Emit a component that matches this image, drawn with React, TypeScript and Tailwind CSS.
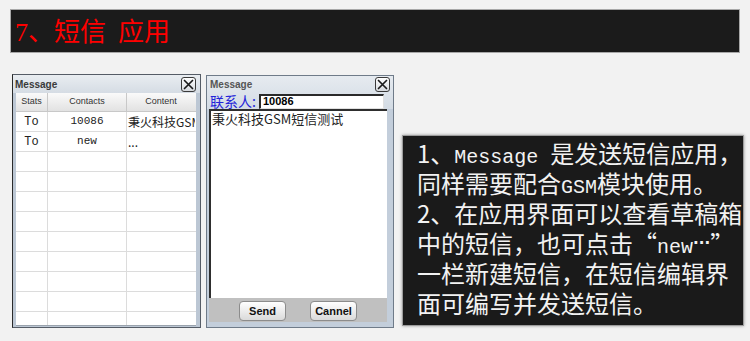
import React from "react";

const CloseBtn = () => (
  <div className="w-[15px] h-[15px] border border-[#3a3a3a] rounded-[3px] bg-linear-to-b from-white to-[#d6d9dd] flex items-center justify-center">
    <svg width="11" height="11" viewBox="0 0 11 11">
      <path d="M1.5 1.5 L9.5 9.5 M9.5 1.5 L1.5 9.5" stroke="#1a1a1a" strokeWidth="1.7" strokeLinecap="round" />
    </svg>
  </div>
);

const mono = "font-['Liberation_Mono',monospace]";
const cjk = "font-['Noto_Sans_CJK_SC',sans-serif]";

const Line = ({ children }: { children: React.ReactNode }) => (
  <div className="h-[30px] leading-[30px] whitespace-nowrap">{children}</div>
);

const M = ({ children }: { children: React.ReactNode }) => (
  <span className={`text-[20px] leading-none ${mono}`}>{children}</span>
);

export default function App() {
  const rows = [
    ["To", "10086", "秉火科技GSM短信测试"],
    ["To", "new", "..."],
    ["", "", ""],
    ["", "", ""],
    ["", "", ""],
    ["", "", ""],
    ["", "", ""],
    ["", "", ""],
    ["", "", ""],
    ["", "", ""],
    ["", "", ""],
  ];
  return (
    <div className="w-[750px] h-[341px] bg-[#f2f2f2] overflow-hidden">
      <div className="ml-[10px] mt-[9px] w-[730px] h-[44px] bg-[#1b1b1b] border border-[#a8a8a8] flex items-center pl-[4px] pt-[3px]">
        <span className="text-[26px] leading-none text-[#ff0000] font-['Liberation_Serif','Noto_Sans_CJK_SC',serif]">
          7、短信<span className="inline-block w-[12px]"></span>应用
        </span>
      </div>

      <div className="flex items-start mt-[21px]">
        {/* Left window */}
        <div className="ml-[12px] w-[189px] h-[254px] flex flex-col border border-[#555c66] border-l-[#2a2a2a] bg-[#bcc7d4]">
          <div className="h-[18px] flex items-center justify-between pl-[2px] pr-[4px] bg-linear-to-b from-[#e9edf1] to-[#d5dce4]">
            <span className="text-[10px] font-bold text-[#3a3a3a] font-['Liberation_Sans',sans-serif]">Message</span>
            <CloseBtn />
          </div>
          <div className="flex-1 ml-[3px] mr-[4px] mb-[1px] bg-white overflow-hidden border-b border-[#9aa3ad]">
            <div className="grid grid-cols-[32px_79px_68px] h-[19px] bg-linear-to-b from-[#fafafa] to-[#e2e2e2] border-b border-[#c8c8c8] text-[9px] text-[#333] font-['Liberation_Sans',sans-serif]">
              <div className="flex items-center justify-center border-r border-[#c8c8c8]">Stats</div>
              <div className="flex items-center justify-center border-r border-[#c8c8c8]">Contacts</div>
              <div className="flex items-center justify-center">Content</div>
            </div>
            {rows.map((r, i) => (
              <div key={i} className="grid grid-cols-[32px_79px_68px] h-[20px] border-b border-[#dcdcdc] text-[#222]">
                <div className={`flex items-center justify-center border-r border-[#dcdcdc] text-[12px] ${mono}`}>{r[0]}</div>
                <div className={`flex items-center justify-center border-r border-[#dcdcdc] text-[11px] ${mono}`}>{r[1]}</div>
                <div className={`flex items-center pl-[1px] overflow-hidden whitespace-nowrap text-[12px] ${cjk}`}>{r[2]}</div>
              </div>
            ))}
          </div>
        </div>

        {/* Right window */}
        <div className="ml-[5px] mt-[1px] w-[188px] h-[253px] flex flex-col border border-[#6f7b89] bg-[#c3cedb]">
          <div className="bg-linear-to-b from-[#e6ebf0] to-[#d3dbe4]">
            <div className="h-[17px] flex items-center justify-between pl-[3px] pr-[3px]">
              <span className="text-[10px] font-bold text-[#555] font-['Liberation_Sans',sans-serif]">Message</span>
              <CloseBtn />
            </div>
            <div className="h-[16px] flex items-center pl-[3px]">
              <span className={`text-[14px] leading-none text-[#2323d8] ${cjk}`}>联系人:</span>
              <div className="ml-[3px] w-[125px] h-[15px] bg-white border-t-2 border-l-2 border-[#2a2a2a] border-r border-b border-r-[#e0e0e0] border-b-[#e0e0e0] flex items-center pl-[2px]">
                <span className="text-[11px] font-bold text-black font-['Liberation_Sans',sans-serif] leading-none">10086</span>
              </div>
            </div>
          </div>
          <div className="ml-[2px] w-[178px] h-[189px] bg-white border-t-2 border-l-2 border-[#2e2e2e] pl-[1px]">
            <div className={`text-[13px] leading-[15px] text-[#222] ${cjk}`}>秉火科技GSM短信测试</div>
          </div>
          <div className="ml-[2px] w-[178px] h-[24px] bg-[#c0c0c0] flex items-center justify-center gap-[24px] pt-[2px]">
            <div className="w-[47px] h-[20px] rounded-[4px] border border-[#8c8c8c] bg-linear-to-b from-white to-[#dadada] flex items-center justify-center text-[11px] font-bold text-[#111] font-['Liberation_Sans',sans-serif]">
              Send
            </div>
            <div className="w-[47px] h-[20px] rounded-[4px] border border-[#8c8c8c] bg-linear-to-b from-white to-[#dadada] flex items-center justify-center text-[11px] font-bold text-[#111] font-['Liberation_Sans',sans-serif]">
              Cannel
            </div>
          </div>
        </div>

        {/* Text box */}
        <div className={`ml-[8px] mt-[61px] w-[342px] h-[191px] bg-[#1a1a1a] border border-[#9c9c9c] shadow-[0_0_3px_rgba(0,0,0,0.35)] pl-[14px] pt-[2px] text-[24px] text-[#f2f2f2] ${cjk}`}>
          <Line>1、<M>Message&nbsp;</M>是发送短信应用，</Line>
          <Line>同样需要配合<M>GSM</M>模块使用。</Line>
          <Line>2、在应用界面可以查看草稿箱</Line>
          <Line>
            中的短信，也可点击“<M>new</M>
            <span className="relative top-[-5px] text-[15px] font-bold leading-none font-['DejaVu_Sans',sans-serif]">···</span>”
          </Line>
          <Line>一栏新建短信，在短信编辑界</Line>
          <Line>面可编写并发送短信。</Line>
        </div>
      </div>
    </div>
  );
}
